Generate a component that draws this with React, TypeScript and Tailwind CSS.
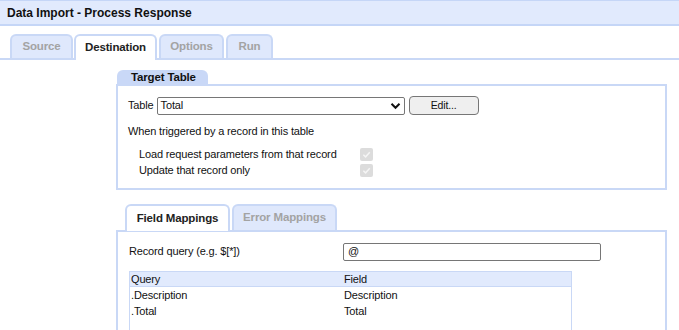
import React from "react";

function Tab({ label, active, w }: { label: string; active?: boolean; w: string }) {
  return active ? (
    <div
      className={`${w} h-[26px] -mb-[2px] rounded-t-[6px] border-2 border-b-0 border-[#c9d8f6] bg-white flex items-center justify-center font-bold text-[#222] text-[11.5px]`}
    >
      {label}
    </div>
  ) : (
    <div
      className={`${w} h-[24px] rounded-t-[6px] border-2 border-b-0 border-[#c9d8f6] bg-[#dfe8fc] flex items-center justify-center font-bold text-[#a3a3a3] text-[11.5px]`}
    >
      {label}
    </div>
  );
}

function Check() {
  return (
    <div className="w-[13px] h-[13px] rounded-[2px] bg-[#dcdcdc] flex items-center justify-center">
      <svg width="9" height="9" viewBox="0 0 10 10">
        <path d="M1.5 5.2 L4 7.6 L8.6 2.4" stroke="#f5f5f5" strokeWidth="1.6" fill="none" />
      </svg>
    </div>
  );
}

export default function App() {
  return (
    <div
      className="w-[679px] h-[330px] overflow-hidden bg-white text-[11px] tracking-[-0.15px] text-[#111]"
      style={{ fontFamily: '"Liberation Sans", Arial, sans-serif' }}
    >
      {/* Title bar */}
      <div className="h-[26px] border-t border-b-2 border-[#c5d6f7] bg-[#e1eafd] flex items-center pl-[7px] font-bold text-[12px] tracking-normal">
        Data Import - Process Response
      </div>

      {/* Tabs */}
      <div className="mt-[7px] h-[27px] border-b-2 border-[#c9d8f6] flex items-end pl-[10px]">
        <Tab label="Source" w="w-[63px]" />
        <div className="w-[1px]" />
        <Tab label="Destination" active w="w-[83px]" />
        <div className="w-[2px]" />
        <Tab label="Options" w="w-[65px]" />
        <div className="w-[2px]" />
        <Tab label="Run" w="w-[47px]" />
      </div>

      {/* Target Table */}
      <div className="ml-[116px] w-[551px] mt-[10px]">
        <div className="w-[91px] h-[14px] ml-[1px] bg-[#c9d8f7] rounded-tr-[6px] rounded-tl-[6px] font-bold pl-[14px] leading-[14px] text-[11.5px] text-[#111]">
          Target Table
        </div>
        <div className="h-[106px] border-2 border-[#c9d8f6] pl-[10px] pt-[10px]">
          <div className="flex items-center h-[19px]">
            <span className="mr-[3px]">Table</span>
            <div className="w-[248px] h-[18px] border border-[#767676] rounded-[2px] flex items-center justify-between pl-[3px] pr-[3px]">
              <span>Total</span>
              <svg width="11" height="8" viewBox="0 0 11 8">
                <path d="M1.5 1.8 L5.5 5.8 L9.5 1.8" stroke="#111" strokeWidth="2" fill="none" />
              </svg>
            </div>
            <div className="ml-[4px] w-[70px] h-[19px] border border-[#767676] rounded-[4px] bg-[#efefef] flex items-center justify-center text-[10.5px]">
              Edit...
            </div>
          </div>
          <div className="mt-[8px] h-[16px] leading-[16px]">When triggered by a record in this table</div>
          <div className="mt-[7px] pl-[11px] flex flex-col">
            <div className="flex items-center h-[16px]">
              <span className="w-[221px] whitespace-nowrap">Load request parameters from that record</span>
              <Check />
            </div>
            <div className="flex items-center h-[16px]">
              <span className="w-[221px] whitespace-nowrap">Update that record only</span>
              <Check />
            </div>
          </div>
        </div>
      </div>

      {/* Mappings */}
      <div className="ml-[116px] w-[551px] mt-[14px]">
        <div className="flex items-end pl-[9px] h-[26px]">
          <div className="w-[105px] h-[27px] -mb-[1px] rounded-t-[6px] border-2 border-b-0 border-[#c9d8f6] bg-white flex items-center justify-center font-bold text-[11.5px] text-[#222] relative z-10">
            Field Mappings
          </div>
          <div className="w-[2px]" />
          <div className="w-[105px] h-[26px] rounded-t-[6px] border-2 border-b-0 border-[#c9d8f6] bg-[#dfe8fc] flex items-center justify-center font-bold text-[11.5px] text-[#a3a3a3]">
            Error Mappings
          </div>
        </div>
        <div className="h-[120px] border-2 border-b-0 border-[#c9d8f6] pl-[11px] pt-[10px]">
          <div className="flex items-center h-[19px]">
            <span className="w-[214px]">Record query (e.g. $[*])</span>
            <div className="w-[258px] h-[18px] border border-[#767676] rounded-[2px] flex items-center pl-[4px]">
              @
            </div>
          </div>
          <div className="mt-[10px] w-[443px] h-[80px] border border-[#c9d8f6]">
            <div className="h-[15px] bg-[#e1eafd] border-b border-[#c9d8f6] flex items-center">
              <span className="w-[214px] pl-[1px]">Query</span>
              <span>Field</span>
            </div>
            <div className="flex items-center h-[16px]">
              <span className="w-[214px] pl-[1px]">.Description</span>
              <span>Description</span>
            </div>
            <div className="flex items-center h-[16px]">
              <span className="w-[214px] pl-[1px]">.Total</span>
              <span>Total</span>
            </div>
          </div>
        </div>
      </div>
    </div>
  );
}
